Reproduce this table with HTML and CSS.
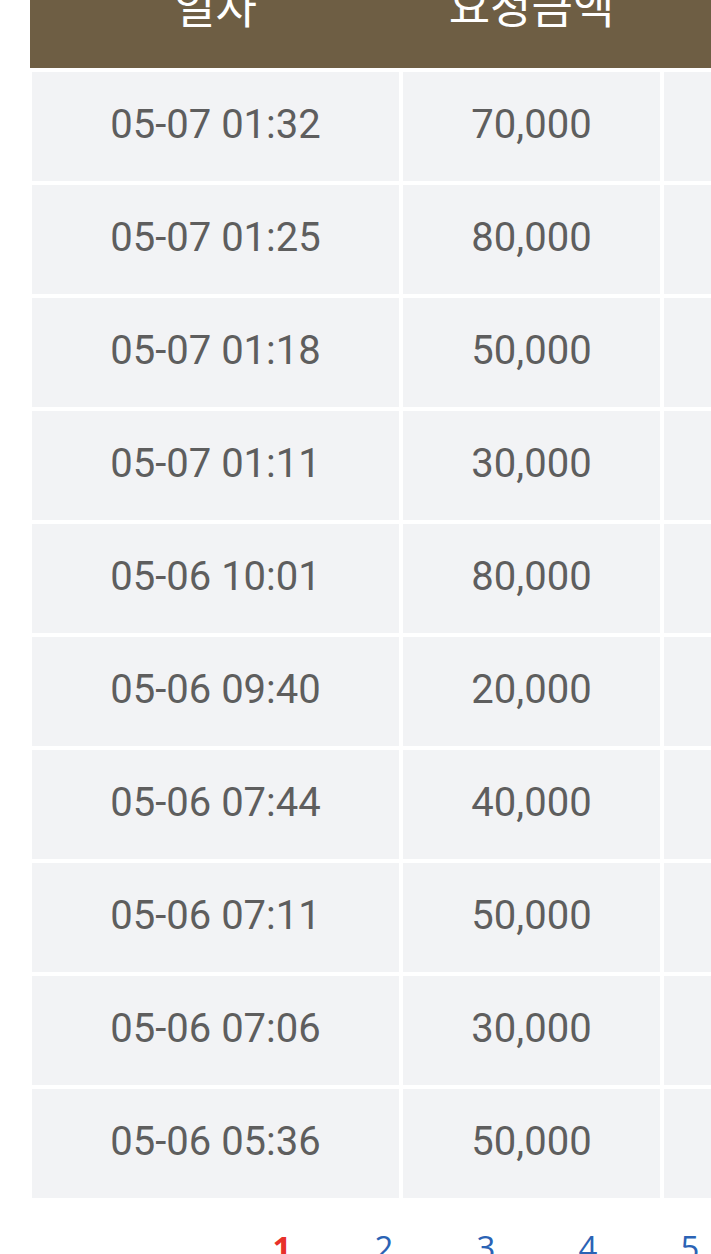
FILE: index.html
```html
<!DOCTYPE html>
<html lang="ko">
<head>
<meta charset="utf-8">
<title>요청내역</title>
<link rel="stylesheet" href="styles.css">
</head>
<body>
<div class="page">
  <div class="board">
    <div class="thead">
      <div class="th">일자</div>
      <div class="th">요청금액</div>
      <div class="th">입금상태</div>
    </div>
    <div class="tbody">
      <div class="td">05-07 01:32</div><div class="td">70,000</div><div class="td"></div>
      <div class="td">05-07 01:25</div><div class="td">80,000</div><div class="td"></div>
      <div class="td">05-07 01:18</div><div class="td">50,000</div><div class="td"></div>
      <div class="td">05-07 01:11</div><div class="td">30,000</div><div class="td"></div>
      <div class="td">05-06 10:01</div><div class="td">80,000</div><div class="td"></div>
      <div class="td">05-06 09:40</div><div class="td">20,000</div><div class="td"></div>
      <div class="td">05-06 07:44</div><div class="td">40,000</div><div class="td"></div>
      <div class="td">05-06 07:11</div><div class="td">50,000</div><div class="td"></div>
      <div class="td">05-06 07:06</div><div class="td">30,000</div><div class="td"></div>
      <div class="td">05-06 05:36</div><div class="td">50,000</div><div class="td"></div>
    </div>
  </div>
  <div class="paging">
    <a class="pg current">1</a>
    <a class="pg">2</a>
    <a class="pg">3</a>
    <a class="pg">4</a>
    <a class="pg">5</a>
  </div>
</div>
</body>
</html>
```

FILE: styles.css
```css
html, body {
  margin: 0;
  padding: 0;
  background: #ffffff;
  overflow: hidden;
}

.page {
  width: 711px;
  overflow: hidden;
  margin-top: -57px;
}

.board {
  margin-left: 30px;
  width: 900px;
}

.thead {
  background: #6e5e44;
  height: 125px;
  display: grid;
  grid-template-columns: 367px 257px 257px;
  column-gap: 4px;
  padding-left: 2px;
}

.th {
  display: flex;
  align-items: center;
  justify-content: center;
  padding-bottom: 2px;
  color: #ffffff;
  font-family: "Noto Sans CJK KR", "Noto Sans", sans-serif;
  font-size: 45px;
  white-space: nowrap;
}

.tbody {
  display: grid;
  grid-template-columns: 367px 257px 257px;
  column-gap: 4px;
  row-gap: 4px;
  padding: 4px 0 0 2px;
}

.td {
  background: #f2f3f5;
  height: 109px;
  box-sizing: border-box;
  padding-bottom: 5px;
  display: flex;
  align-items: center;
  justify-content: center;
  color: #5e5e5e;
  font-family: Roboto, "Noto Sans CJK KR", sans-serif;
  font-size: 40px;
  white-space: nowrap;
}

.paging {
  display: flex;
  padding: 28px 0 0 231px;
}

.pg {
  flex: 0 0 102px;
  text-align: center;
  font-family: "Open Sans", "Noto Sans", sans-serif;
  font-size: 33px;
  line-height: 44px;
  color: #2b63b5;
}

.pg.current {
  color: #e8312a;
  font-weight: 700;
}
```
